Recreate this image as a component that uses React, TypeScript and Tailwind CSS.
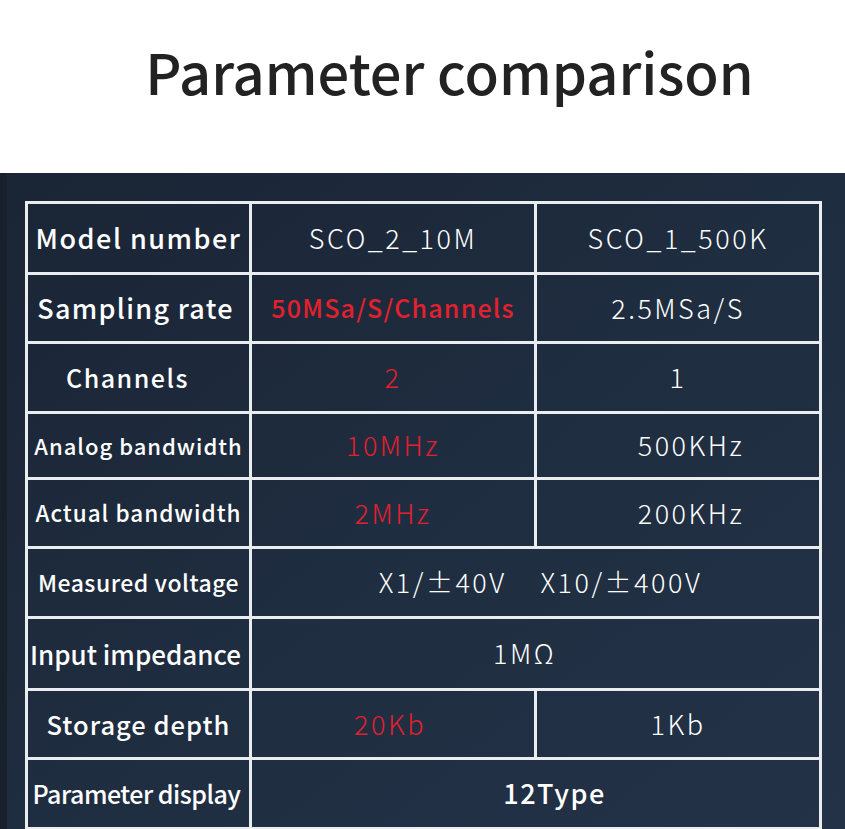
import React from 'react';

type Cell = { text: string; red?: boolean; span?: number; cls?: string };
type Row = { label: string; labelCls: string; h: string; cells: Cell[] };

// regular value text: light weight, wide tracking
const V = 'text-[27px] tracking-[2.5px] font-light';

const ROWS: Row[] = [
  {
    label: 'Model number',
    labelCls: 'text-[27px] tracking-[1.5px]',
    h: 'h-[71px]',
    cells: [{ text: 'SCO_2_10M', cls: V }, { text: 'SCO_1_500K', cls: V }],
  },
  {
    label: 'Sampling rate',
    labelCls: 'text-[27px] tracking-[1.3px] pr-[6px]',
    h: 'h-[69px]',
    cells: [
      { text: '50MSa/S/Channels', red: true, cls: 'text-[25px] tracking-[1.2px] font-medium' },
      { text: '2.5MSa/S', cls: V },
    ],
  },
  {
    label: 'Channels',
    labelCls: 'text-[25px] tracking-[1.5px] pr-[22px]',
    h: 'h-[70px]',
    cells: [{ text: '2', red: true, cls: V }, { text: '1', cls: V }],
  },
  {
    label: 'Analog bandwidth',
    labelCls: 'text-[22px] tracking-[1px]',
    h: 'h-[66px]',
    cells: [{ text: '10MHz', red: true, cls: V }, { text: '500KHz', cls: `${V} pl-[26px]` }],
  },
  {
    label: 'Actual bandwidth',
    labelCls: 'text-[22.5px] tracking-[1px]',
    h: 'h-[69px]',
    cells: [{ text: '2MHz', red: true, cls: V }, { text: '200KHz', cls: `${V} pl-[26px]` }],
  },
  {
    label: 'Measured voltage',
    labelCls: 'text-[23px] tracking-[0.5px]',
    h: 'h-[70px]',
    cells: [{ text: 'X1/±40V\u00a0\u00a0\u00a0\u00a0X10/±400V', span: 2, cls: `${V} pl-[10px]` }],
  },
  {
    label: 'Input impedance',
    labelCls: 'text-[26px] tracking-[0px] pr-[6px]',
    h: 'h-[72px]',
    cells: [{ text: '1MΩ', span: 2, cls: `${V} pr-[22px]` }],
  },
  {
    label: 'Storage depth',
    labelCls: 'text-[25.5px] tracking-[1px]',
    h: 'h-[69px]',
    cells: [{ text: '20Kb', red: true, cls: `${V} pr-[6px]` }, { text: '1Kb', cls: V }],
  },
  {
    label: 'Parameter display',
    labelCls: 'text-[25px] tracking-[-0.5px] pr-[4px]',
    h: 'h-[70px]',
    cells: [{ text: '12Type', span: 2, cls: 'text-[27px] tracking-[1.5px] font-medium pl-[38px]' }],
  },
];

export default function App() {
  return (
    <div
      className="w-[845px] h-[829px] overflow-hidden bg-white"
      style={{ fontFamily: '"Noto Sans CJK SC", "Noto Sans", sans-serif' }}
    >
      <div className="h-[173px] flex items-start justify-center pt-[43px] pl-[54px]">
        <h1 className="text-[56px] leading-none text-[#222222] font-medium">Parameter comparison</h1>
      </div>

      <div className="h-[656px] bg-gradient-to-br from-[#1a2535] via-[#1f2d40] to-[#233247] border-l-[7px] border-[#18202c] pl-[18px] pt-[28px]">
        <table className="table-fixed w-[794px] border-collapse text-white">
          <colgroup>
            <col className="w-[224px]" />
            <col className="w-[285px]" />
            <col className="w-[285px]" />
          </colgroup>
          <tbody>
            {ROWS.map(row => (
              <tr key={row.label} className={row.h}>
                <td
                  className={`border-[3px] border-[#e9edf0] text-center whitespace-nowrap p-0 font-medium ${row.labelCls}`}
                >
                  {row.label}
                </td>
                {row.cells.map((c, i) => (
                  <td
                    key={i}
                    colSpan={c.span ?? 1}
                    className={`border-[3px] border-[#e9edf0] text-center whitespace-nowrap p-0 ${
                      c.red ? 'text-[#e3202d]' : 'text-white'
                    } ${c.cls ?? ''}`}
                  >
                    {c.text}
                  </td>
                ))}
              </tr>
            ))}
          </tbody>
        </table>
      </div>
    </div>
  );
}
